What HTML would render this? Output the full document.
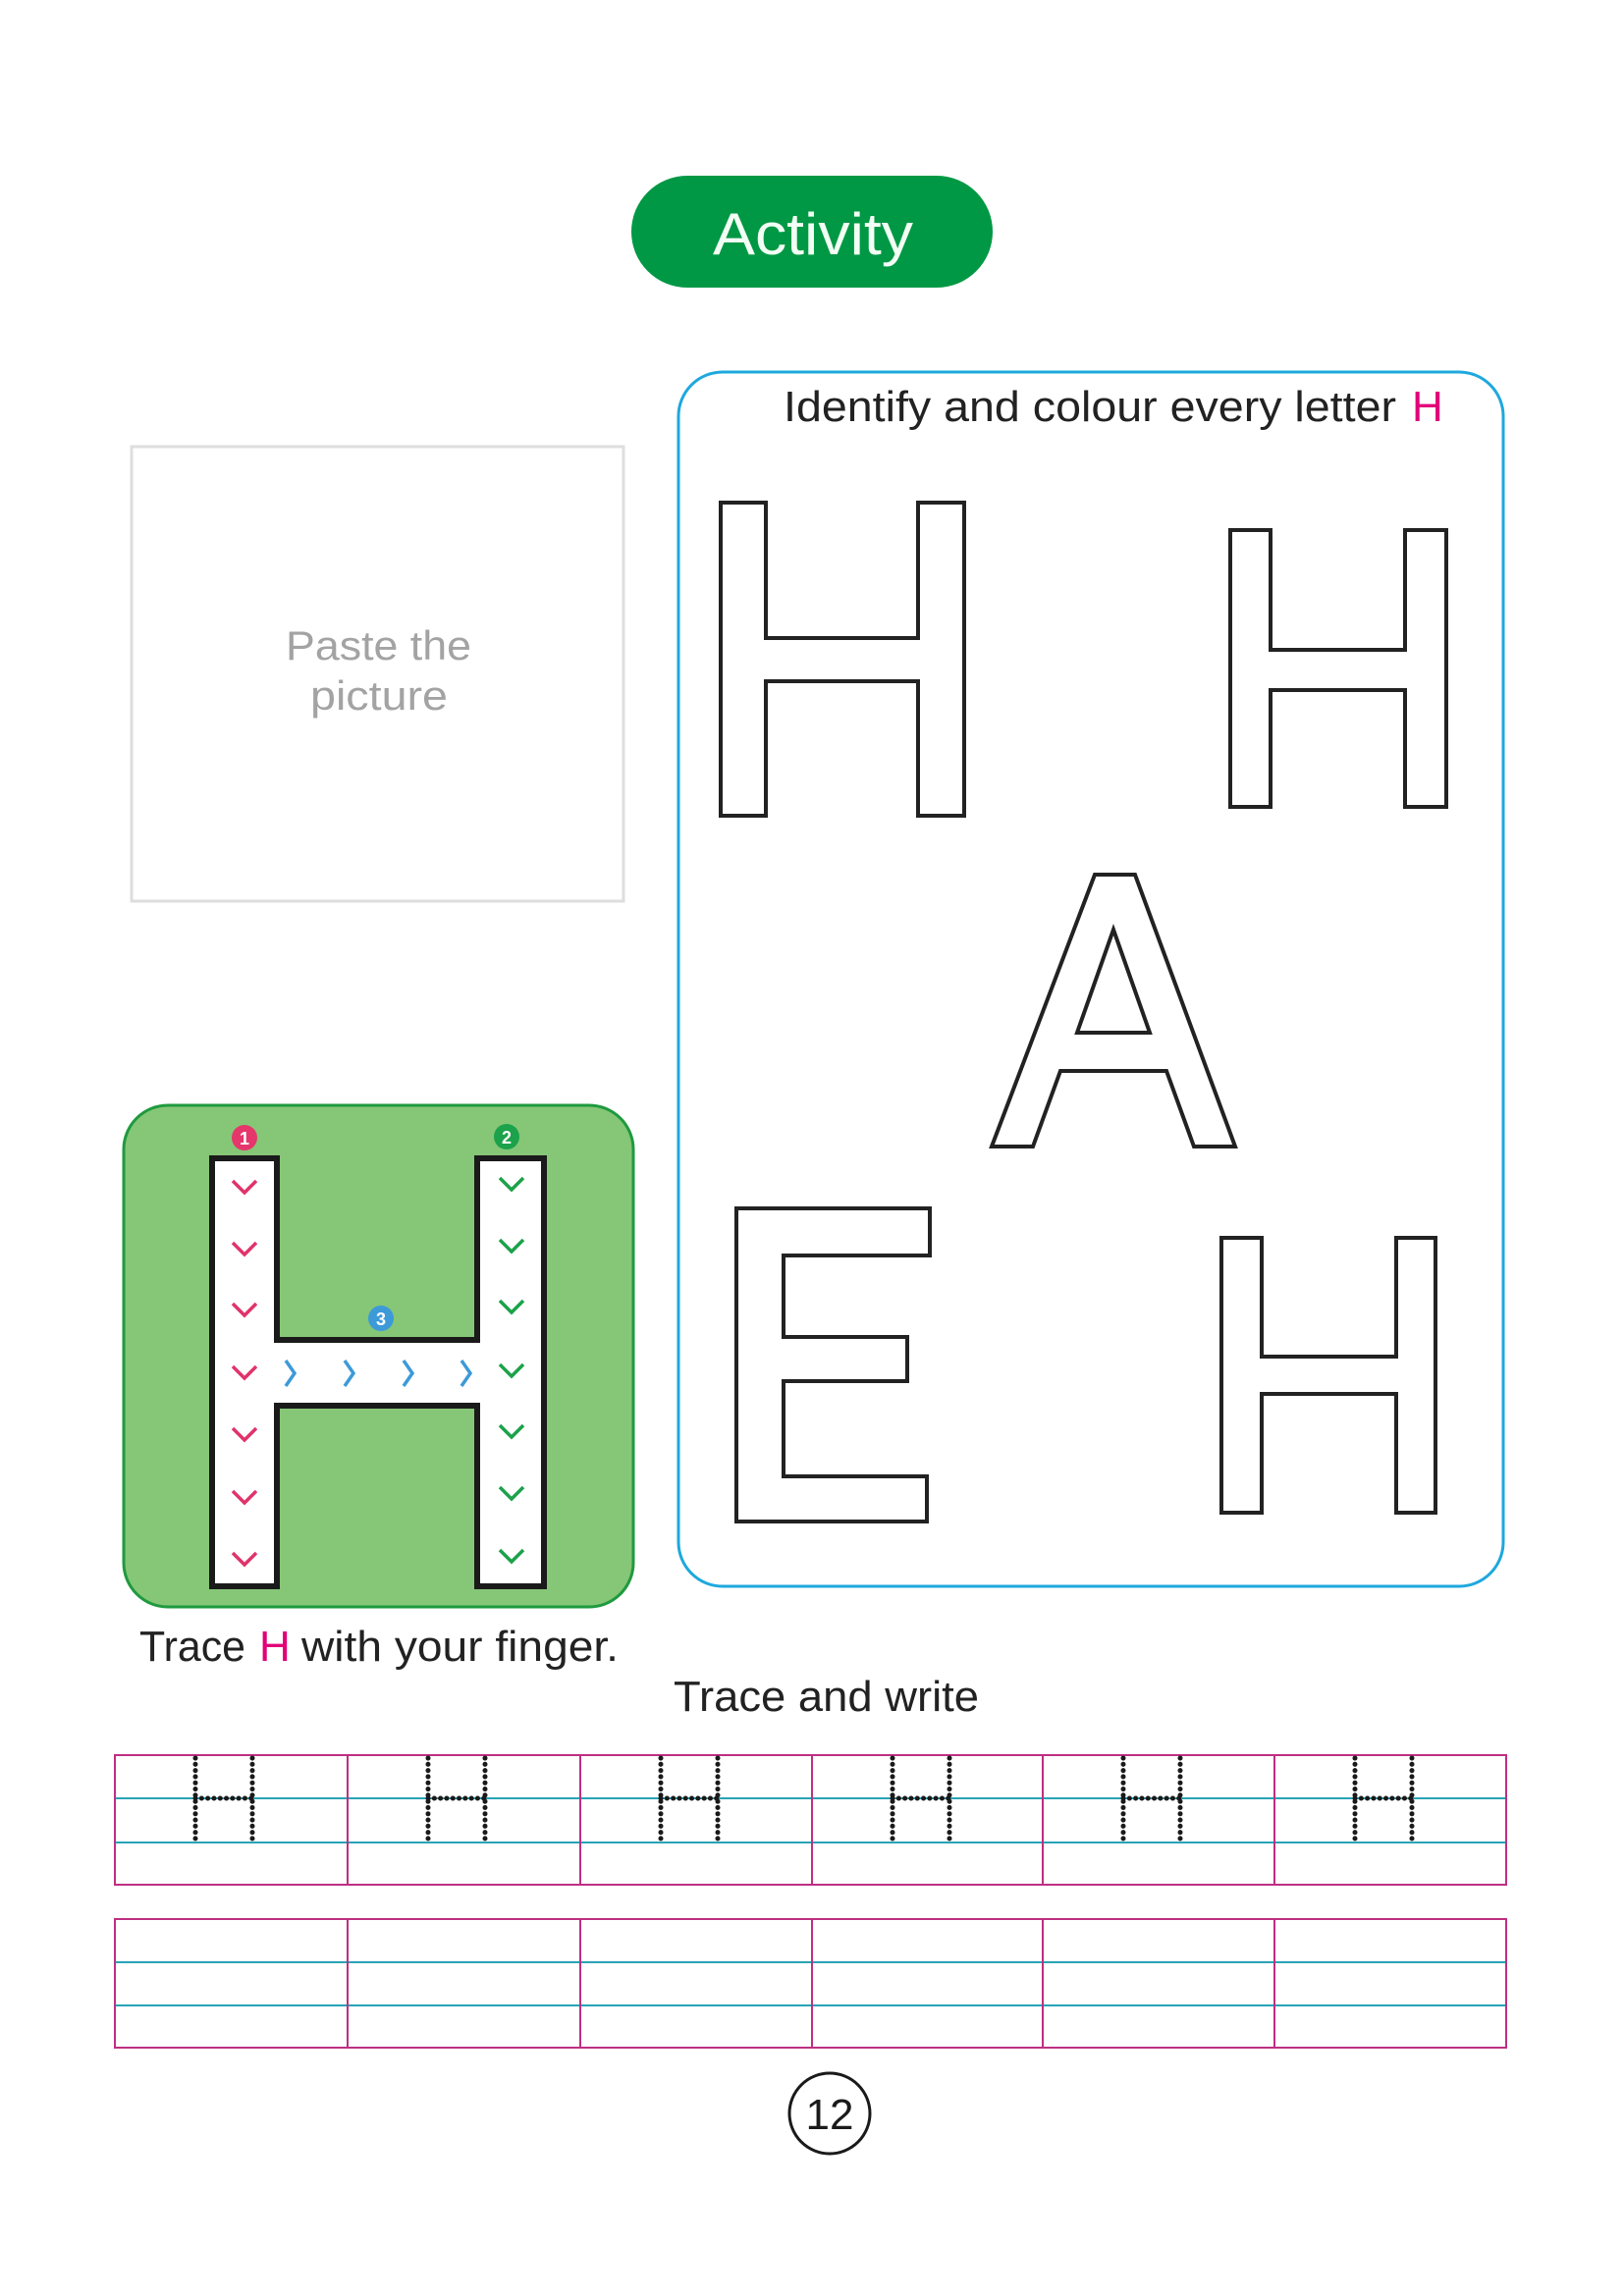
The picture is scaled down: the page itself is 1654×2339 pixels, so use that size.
<!DOCTYPE html>
<html><head><meta charset="utf-8"><style>
html,body{margin:0;padding:0;background:#fff;}
svg{display:block;}
text{font-family:"Liberation Sans",sans-serif;}
</style></head><body>
<svg width="1654" height="2339" viewBox="0 0 1654 2339" xmlns="http://www.w3.org/2000/svg">
<rect width="1654" height="2339" fill="#fff"/>
<!-- Activity pill -->
<rect x="643" y="179" width="368" height="114" rx="57" fill="#009844"/>
<text x="726" y="259" font-size="60" fill="#f2fff4" textLength="204" lengthAdjust="spacingAndGlyphs">Activity</text>

<!-- Paste box -->
<rect x="134" y="455" width="501" height="463" fill="none" stroke="#dedede" stroke-width="3"/>
<text x="291" y="672" font-size="42" fill="#a3a3a3" textLength="189" lengthAdjust="spacingAndGlyphs">Paste the</text>
<text x="316" y="723" font-size="42" fill="#a3a3a3" textLength="140" lengthAdjust="spacingAndGlyphs">picture</text>

<!-- Blue box -->
<rect x="691" y="379" width="840" height="1237" rx="45" fill="none" stroke="#1ea8de" stroke-width="3"/>
<text x="798" y="429" font-size="44" fill="#222" textLength="624" lengthAdjust="spacingAndGlyphs">Identify and colour every letter</text>
<text x="1438" y="429" font-size="44" fill="#e2007a">H</text>

<g fill="none" stroke="#222" stroke-width="4" stroke-linejoin="miter">
<path d="M734 512 H780 V650 H935 V512 H982 V831 H935 V694 H780 V831 H734 Z"/>
<path d="M1253 540 H1294 V662 H1431 V540 H1473 V822 H1431 V703 H1294 V822 H1253 Z"/>
<path d="M1010 1168 L1115 891 H1156 L1258 1168 H1216 L1188 1091 H1080 L1052 1168 Z"/>
<path d="M1097 1052 H1171 L1134 947 Z"/>
<path d="M750 1231 H947 V1279 H798 V1362 H924 V1407 H798 V1504 H944 V1550 H750 Z"/>
<path d="M1244 1261 H1285 V1382 H1422 V1261 H1462 V1541 H1422 V1420 H1285 V1541 H1244 Z"/>
</g>

<!-- Green trace box -->
<rect x="126" y="1126" width="519" height="511" rx="45" fill="#86c677" stroke="#1f9a3f" stroke-width="3"/>
<path d="M216 1180 H282 V1365 H486 V1180 H554 V1616 H486 V1432 H282 V1616 H216 Z" fill="#fff" stroke="#1a1a1a" stroke-width="6"/>
<circle cx="249" cy="1159" r="13" fill="#e5376b"/>
<text x="249" y="1166" font-size="18" font-weight="bold" fill="#fff" text-anchor="middle">1</text>
<circle cx="516" cy="1158" r="13" fill="#1ba24a"/>
<text x="516" y="1165" font-size="18" font-weight="bold" fill="#fff" text-anchor="middle">2</text>
<circle cx="388" cy="1343" r="13" fill="#3d9ad8"/>
<text x="388" y="1350" font-size="18" font-weight="bold" fill="#fff" text-anchor="middle">3</text>
<g fill="none" stroke="#e0336b" stroke-width="3.5">
<path d="M237 1203 l12 12 l12 -12"/><path d="M237 1266 l12 12 l12 -12"/><path d="M237 1328 l12 12 l12 -12"/><path d="M237 1392 l12 12 l12 -12"/><path d="M237 1455 l12 12 l12 -12"/><path d="M237 1519 l12 12 l12 -12"/><path d="M237 1582 l12 12 l12 -12"/>
</g>
<g fill="none" stroke="#1ba24a" stroke-width="3.5">
<path d="M509 1200 l12 12 l12 -12"/><path d="M509 1263 l12 12 l12 -12"/><path d="M509 1325 l12 12 l12 -12"/><path d="M509 1390 l12 12 l12 -12"/><path d="M509 1452 l12 12 l12 -12"/><path d="M509 1515 l12 12 l12 -12"/><path d="M509 1579 l12 12 l12 -12"/>
</g>
<g fill="none" stroke="#3d9ad8" stroke-width="3.5">
<path d="M291 1386 l9 13 l-9 13"/><path d="M351 1386 l9 13 l-9 13"/><path d="M411 1386 l9 13 l-9 13"/><path d="M470 1386 l9 13 l-9 13"/>
</g>
<text x="142" y="1692" font-size="44" fill="#222" textLength="108" lengthAdjust="spacingAndGlyphs">Trace</text>
<text x="264" y="1692" font-size="44" fill="#e2007a">H</text>
<text x="307" y="1692" font-size="44" fill="#222" textLength="323" lengthAdjust="spacingAndGlyphs">with your finger.</text>
<text x="686" y="1743" font-size="44" fill="#222" textLength="311" lengthAdjust="spacingAndGlyphs">Trace and write</text>

<!-- Grids -->
<g stroke="#29a3b6" stroke-width="2">
<line x1="117" y1="1832" x2="1534" y2="1832"/><line x1="117" y1="1877" x2="1534" y2="1877"/>
<line x1="117" y1="1999" x2="1534" y2="1999"/><line x1="117" y1="2043" x2="1534" y2="2043"/>
</g>
<g fill="none" stroke="#be2f82" stroke-width="2">
<rect x="117" y="1788" width="1417" height="132"/>
<rect x="117" y="1955" width="1417" height="131"/>
<path d="M354 1788 V1920 M591 1788 V1920 M827 1788 V1920 M1062 1788 V1920 M1298 1788 V1920"/>
<path d="M354 1955 V2086 M591 1955 V2086 M827 1955 V2086 M1062 1955 V2086 M1298 1955 V2086"/>
</g>
<g fill="none" stroke="#1a1a1a" stroke-width="5" stroke-dasharray="0.1 6.2" stroke-linecap="round">
<path d="M199 1791 V1876 M257 1791 V1876 M199 1832 H257"/>
<path d="M436 1791 V1876 M494 1791 V1876 M436 1832 H494"/>
<path d="M673 1791 V1876 M731 1791 V1876 M673 1832 H731"/>
<path d="M909 1791 V1876 M967 1791 V1876 M909 1832 H967"/>
<path d="M1144 1791 V1876 M1202 1791 V1876 M1144 1832 H1202"/>
<path d="M1380 1791 V1876 M1438 1791 V1876 M1380 1832 H1438"/>
</g>

<!-- Page number -->
<circle cx="845" cy="2153" r="41" fill="none" stroke="#1a1a1a" stroke-width="3"/>
<text x="845" y="2169" font-size="44" fill="#1a1a1a" text-anchor="middle">12</text>
</svg>
</body></html>
